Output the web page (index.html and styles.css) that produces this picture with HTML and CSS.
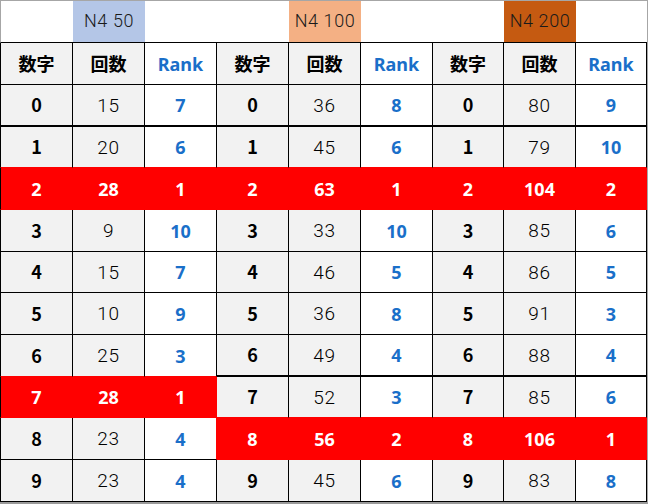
FILE: index.html
```html
<!DOCTYPE html>
<html lang="ja">
<head>
<meta charset="utf-8">
<link rel="stylesheet" href="styles.css">
</head>
<body>
<div class="frame">
  <div class="sheet">
    <div class="t first"></div><div class="t blue">N4 50</div><div class="t"></div>
    <div class="t"></div><div class="t orange">N4 100</div><div class="t"></div>
    <div class="t"></div><div class="t brown">N4 200</div><div class="t"></div>

    <div class="c g b first">数字</div><div class="c g b">回数</div><div class="c k">Rank</div>
    <div class="c g b">数字</div><div class="c g b">回数</div><div class="c k">Rank</div>
    <div class="c g b">数字</div><div class="c g b">回数</div><div class="c k">Rank</div>

    <div class="c g b first thick">0</div><div class="c g n thick">15</div><div class="c k thick">7</div>
    <div class="c g b thick">0</div><div class="c g n thick">36</div><div class="c k thick">8</div>
    <div class="c g b thick">0</div><div class="c g n thick">80</div><div class="c k thick">9</div>

    <div class="c g b first rb">1</div><div class="c g n rb">20</div><div class="c k rb">6</div>
    <div class="c g b rb">1</div><div class="c g n rb">45</div><div class="c k rb">6</div>
    <div class="c g b rb">1</div><div class="c g n rb">79</div><div class="c k rb">10</div>

    <div class="c red first">2</div><div class="c red">28</div><div class="c red">1</div>
    <div class="c red">2</div><div class="c red">63</div><div class="c red">1</div>
    <div class="c red">2</div><div class="c red">104</div><div class="c red">2</div>

    <div class="c g b first">3</div><div class="c g n">9</div><div class="c k">10</div>
    <div class="c g b">3</div><div class="c g n">33</div><div class="c k">10</div>
    <div class="c g b">3</div><div class="c g n">85</div><div class="c k">6</div>

    <div class="c g b first">4</div><div class="c g n">15</div><div class="c k">7</div>
    <div class="c g b">4</div><div class="c g n">46</div><div class="c k">5</div>
    <div class="c g b">4</div><div class="c g n">86</div><div class="c k">5</div>

    <div class="c g b first">5</div><div class="c g n">10</div><div class="c k">9</div>
    <div class="c g b">5</div><div class="c g n">36</div><div class="c k">8</div>
    <div class="c g b">5</div><div class="c g n">91</div><div class="c k">3</div>

    <div class="c g b first rb">6</div><div class="c g n rb">25</div><div class="c k rb">3</div>
    <div class="c g b thick">6</div><div class="c g n thick">49</div><div class="c k thick">4</div>
    <div class="c g b thick">6</div><div class="c g n thick">88</div><div class="c k thick">4</div>

    <div class="c red first">7</div><div class="c red">28</div><div class="c red">1</div>
    <div class="c g b rb">7</div><div class="c g n rb">52</div><div class="c k rb">3</div>
    <div class="c g b rb">7</div><div class="c g n rb">85</div><div class="c k rb">6</div>

    <div class="c g b first">8</div><div class="c g n">23</div><div class="c k rr">4</div>
    <div class="c red">8</div><div class="c red">56</div><div class="c red">2</div>
    <div class="c red">8</div><div class="c red">106</div><div class="c red">1</div>

    <div class="c g b first">9</div><div class="c g n">23</div><div class="c k">4</div>
    <div class="c g b">9</div><div class="c g n">45</div><div class="c k">6</div>
    <div class="c g b">9</div><div class="c g n">83</div><div class="c k">8</div>
  </div>
</div>
</body>
</html>
```
FILE: styles.css
```css
html, body {
  margin: 0;
  padding: 0;
  background: #ffffff;
}
body {
  width: 648px;
  height: 504px;
  overflow: hidden;
  font-family: "Noto Sans", "Noto Sans CJK JP", sans-serif;
}
.frame {
  box-sizing: border-box;
  width: 648px;
  height: 504px;
  border-top: 1px solid #a6a6a6;
  border-right: 1px solid #a6a6a6;
  border-bottom: 2px solid #9a9a9a;
}
.sheet {
  display: grid;
  grid-template-columns: 73px 72px 72px 72px 72px 72px 71px 72px 71px;
  grid-template-rows: 42px 42px 42px 41px 42px 42px 41px 42px 42px 41px 42px 42px;
}
.sheet > div {
  box-sizing: border-box;
  display: flex;
  align-items: center;
  justify-content: center;
  font-size: 18px;
  line-height: 1;
}
.t {
  border-bottom: 1px solid #000;
  color: #1a1a1a;
  font-family: Roboto, "Noto Sans", sans-serif;
  font-weight: 300;
  font-size: 19px;
  letter-spacing: 0.6px;
  padding-bottom: 1px;
}
.t.first { border-left: 1px solid #a6a6a6; }
.blue { background: #b4c6e7; }
.orange { background: #f4b084; }
.brown { background: #c55a11; }
.c {
  border-right: 1px solid #000;
  border-bottom: 1px solid #000;
  background: #ffffff;
}
.c.first { border-left: 1px solid #000; }
.g { background: #f2f2f2; }
.b {
  font-weight: 700;
  color: #000;
  font-family: "Noto Sans CJK JP", "Noto Sans", sans-serif;
  padding-bottom: 2px;
}
.sheet > .n {
  font-weight: 300;
  font-size: 19px;
  letter-spacing: 0.6px;
  color: #000;
  font-family: Roboto, "Noto Sans", sans-serif;
}
.k {
  font-weight: 700;
  color: #1a6fc9;
}
.thick { border-bottom-width: 2px; }
.rb { border-bottom-color: #ff0000; }
.rr { border-right-color: #ff0000; }
.red {
  background: #ff0000;
  border-color: #ff0000;
  color: #ffffff;
  font-weight: 700;
}
```
